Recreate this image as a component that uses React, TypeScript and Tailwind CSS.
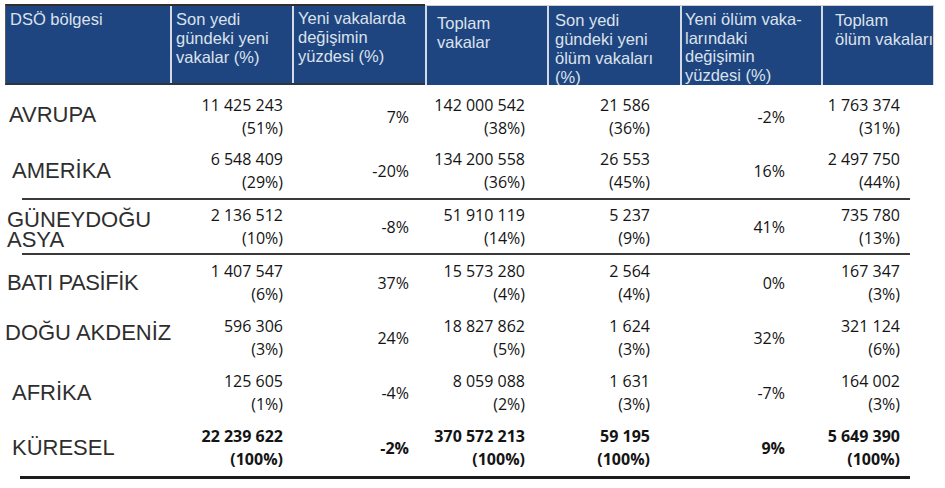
type Row = {
  name: string
  nameClass: string
  height: string
  newCases: string[]
  caseChange: string
  totalCases: string[]
  newDeaths: string[]
  deathChange: string
  totalDeaths: string[]
  bold?: boolean
  divider?: boolean
}

const rows: Row[] = [
  {
    name: "AVRUPA",
    nameClass: "pl-[9px] pb-[3px] leading-[22px] whitespace-nowrap",
    height: "h-[55px]",
    newCases: ["11 425 243", "(51%)"],
    caseChange: "7%",
    totalCases: ["142 000 542", "(38%)"],
    newDeaths: ["21 586", "(36%)"],
    deathChange: "-2%",
    totalDeaths: ["1 763 374", "(31%)"],
  },
  {
    name: "AMERİKA",
    nameClass: "pl-[12px] leading-[22px] whitespace-nowrap",
    height: "h-[54px]",
    newCases: ["6 548 409", "(29%)"],
    caseChange: "-20%",
    totalCases: ["134 200 558", "(36%)"],
    newDeaths: ["26 553", "(45%)"],
    deathChange: "16%",
    totalDeaths: ["2 497 750", "(44%)"],
    divider: true,
  },
  {
    // wraps onto two lines like the slide
    name: "GÜNEYDOĞU ASYA",
    nameClass: "pl-[7px] pt-[6px] w-[150px] leading-[20px]",
    height: "h-[53px]",
    newCases: ["2 136 512", "(10%)"],
    caseChange: "-8%",
    totalCases: ["51 910 119", "(14%)"],
    newDeaths: ["5 237", "(9%)"],
    deathChange: "41%",
    totalDeaths: ["735 780", "(13%)"],
    divider: true,
  },
  {
    name: "BATI PASİFİK",
    nameClass: "pl-[7px] tracking-[-0.4px] leading-[22px] whitespace-nowrap",
    height: "h-[55px]",
    newCases: ["1 407 547", "(6%)"],
    caseChange: "37%",
    totalCases: ["15 573 280", "(4%)"],
    newDeaths: ["2 564", "(4%)"],
    deathChange: "0%",
    totalDeaths: ["167 347", "(3%)"],
  },
  {
    name: "DOĞU AKDENİZ",
    nameClass: "pl-[5px] pb-[10px] leading-[22px] whitespace-nowrap",
    height: "h-[55px]",
    newCases: ["596 306", "(3%)"],
    caseChange: "24%",
    totalCases: ["18 827 862", "(5%)"],
    newDeaths: ["1 624", "(3%)"],
    deathChange: "32%",
    totalDeaths: ["321 124", "(6%)"],
  },
  {
    name: "AFRİKA",
    nameClass: "pl-[12px] leading-[22px] whitespace-nowrap",
    height: "h-[55px]",
    newCases: ["125 605", "(1%)"],
    caseChange: "-4%",
    totalCases: ["8 059 088", "(2%)"],
    newDeaths: ["1 631", "(3%)"],
    deathChange: "-7%",
    totalDeaths: ["164 002", "(3%)"],
  },
  {
    name: "KÜRESEL",
    nameClass: "pl-[12px] leading-[22px] whitespace-nowrap",
    height: "h-[55px]",
    newCases: ["22 239 622", "(100%)"],
    caseChange: "-2%",
    totalCases: ["370 572 213", "(100%)"],
    newDeaths: ["59 195", "(100%)"],
    deathChange: "9%",
    totalDeaths: ["5 649 390", "(100%)"],
    bold: true,
  },
]

function Lines({ lines }: { lines: string[] }) {
  return (
    <>
      {lines.map((l, i) => (
        <div key={i} className="whitespace-nowrap">
          {l}
        </div>
      ))}
    </>
  )
}

function Num({ lines }: { lines: string[] }) {
  return (
    <div className="text-right leading-[23px] whitespace-nowrap">
      <Lines lines={lines} />
    </div>
  )
}

function HeadCell({ lines, className }: { lines: string[]; className: string }) {
  return (
    <div className={"h-full overflow-hidden " + className}>
      <Lines lines={lines} />
    </div>
  )
}

function App() {
  return (
    <div className="w-[945px] h-[488px] bg-white overflow-hidden">
      {/* header, two pasted blocks */}
      <div className="flex pt-[4px] pl-[5px] h-[85px] text-[16.5px] leading-[19px] text-[#dbe2ec] font-['Liberation_Sans',Arial,sans-serif]">
        <div className="flex w-[420px] h-full bg-[#1f4580] border-t-2 border-t-[#2e2e2e] border-l border-l-[#5a5a5a] border-b-2 border-b-[#2f3540]">
          <HeadCell lines={["DSÖ bölgesi"]} className="w-[164px] pl-[4px] pt-[4px]" />
          <HeadCell
            lines={["Son yedi", "gündeki yeni", "vakalar (%)"]}
            className="w-[122px] border-l-2 border-l-[#d3dae5] pl-[4px] pt-[4px]"
          />
          <HeadCell
            lines={["Yeni vakalarda", "değişimin", "yüzdesi (%)"]}
            className="w-[133px] border-l-2 border-l-[#d3dae5] pl-[4px] pt-[3px]"
          />
        </div>
        <div className="flex w-[509px] h-[80px] mt-[1px] bg-[#1f4580] border-t border-t-[#cfcfcf] border-r border-r-[#d8d8d8]">
          <HeadCell
            lines={["Toplam", "vakalar"]}
            className="w-[122px] border-l-2 border-l-[#d3dae5] pl-[10px] pt-[8px]"
          />
          <HeadCell
            lines={["Son yedi", "gündeki yeni", "ölüm vakaları", "(%)"]}
            className="w-[133px] border-l-2 border-l-[#d3dae5] pl-[6px] pt-[5px]"
          />
          <HeadCell
            lines={["Yeni ölüm vaka-", "larındaki", "değişimin", "yüzdesi (%)"]}
            className="w-[141px] border-l-2 border-l-[#d3dae5] pl-[3px] pt-[4px] leading-[18.5px]"
          />
          <HeadCell
            lines={["Toplam", "ölüm vakaları"]}
            className="w-[112px] border-l-2 border-l-[#d3dae5] pl-[12px] pt-[5px]"
          />
        </div>
      </div>

      {/* body rows */}
      <div className="pt-[4px]">
        {rows.map((r) => (
          <div key={r.name}>
            <div
              className={
                "grid grid-cols-[190px_93px_126px_116px_125px_135px_115px] items-center " +
                r.height +
                " font-['Open_Sans',sans-serif] text-[16px] text-[#141414] " +
                (r.bold ? "font-bold" : "")
              }
            >
              <div
                className={
                  "font-['Liberation_Sans',Arial,sans-serif] font-normal text-[22px] text-[#2e2e2e] " +
                  r.nameClass
                }
              >
                {r.name}
              </div>
              <Num lines={r.newCases} />
              <div className="text-right">{r.caseChange}</div>
              <Num lines={r.totalCases} />
              <Num lines={r.newDeaths} />
              <div className="text-right">{r.deathChange}</div>
              <Num lines={r.totalDeaths} />
            </div>
            {r.divider && <div className="ml-[22px] w-[888px] h-[2px] bg-[#3a3a3a]" />}
          </div>
        ))}
        <div className="ml-[20px] mt-[1px] w-[890px] h-[3px] bg-[#1c1c1c]" />
      </div>
    </div>
  )
}

export default App
